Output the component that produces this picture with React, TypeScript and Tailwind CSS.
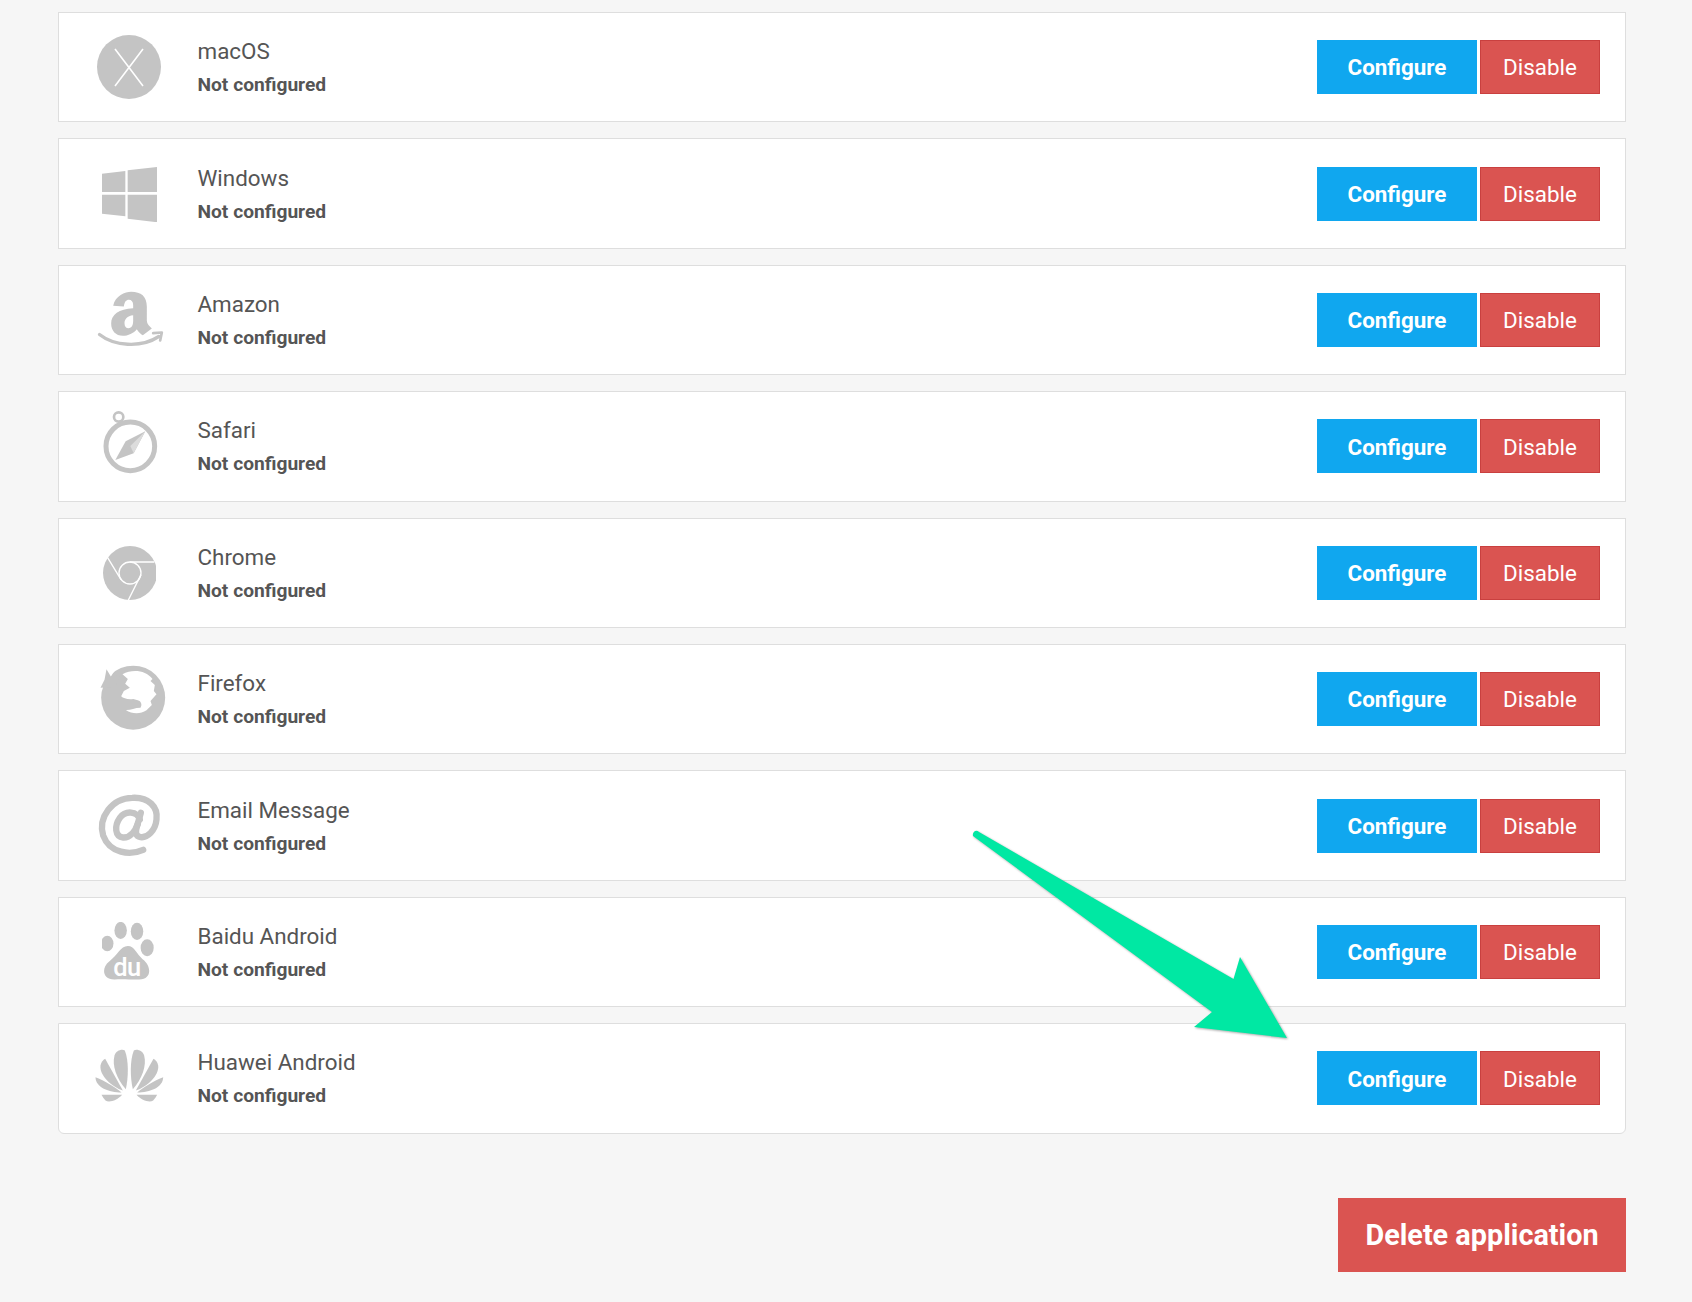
import React from 'react';

const ICON = '#c4c4c4';

function MacIcon() {
  return (
    <svg width="64" height="64" viewBox="0 0 64 64">
      <circle cx="32" cy="32" r="32" fill={ICON} />
      <path d="M18 14 L46 51 M46 14 L18 51" stroke="#fff" strokeWidth="1.6" fill="none" />
    </svg>
  );
}

function WindowsIcon() {
  return (
    <svg width="56" height="56" viewBox="152 497 168 168">
      <path fill={ICON} d="M155 520L225 512V575H155ZM232 510L322 500V575H232ZM155 583H225V648L155 640ZM232 583H322V666L232 655Z" />
    </svg>
  );
}

function AmazonIcon() {
  return (
    <svg width="85" height="85" viewBox="-10.5 -6.5 255 255">
      <path
        fill={ICON}
        fillRule="evenodd"
        d="M68 80C74 50 104 38 122 38C152 38 169 52 169 82V125C169 135 177 142 184 148L157 168C150 164 144 158 139 150C130 162 112 170 97 170C76 170 62 155 62 133C62 105 85 90 128 87V78C128 68 123 62 115 62C107 62 102 68 100 82ZM128 108C110 110 102 120 102 132C102 142 107 147 114 147C124 147 128 138 128 125Z"
      />
      <path fill="none" stroke={ICON} strokeWidth="10" strokeLinecap="round" d="M27 166C70 200 150 208 205 172" />
      <path fill="none" stroke={ICON} strokeWidth="8" strokeLinecap="round" strokeLinejoin="round" d="M188 162L214 160L209 184" />
    </svg>
  );
}

function SafariIcon() {
  return (
    <svg width="56.67" height="71.33" viewBox="152 469 170 214">
      <circle cx="240" cy="575" r="73" fill="none" stroke={ICON} strokeWidth="15" />
      <circle cx="205" cy="487" r="14" fill="none" stroke={ICON} strokeWidth="8" />
      <path fill={ICON} d="M285 530L250 596L195 616L226 560Z" />
      <path fill="#dcdcdc" d="M285 530L250 596L240 574Z" />
    </svg>
  );
}

function ChromeIcon() {
  return (
    <svg width="54" height="54" viewBox="155 106 162 162">
      <circle cx="239" cy="187" r="81" fill={ICON} />
      <g fill="none" stroke="#fff" strokeWidth="4">
        <circle cx="239" cy="187" r="33" />
        <path d="M170 138L212 207M238 154H312M272 192L234 268" />
      </g>
    </svg>
  );
}

function FirefoxIcon() {
  return (
    <svg width="85" height="85" viewBox="-10.5 6 255 255">
      <circle cx="128" cy="128" r="96" fill={ICON} />
      <path fill="#fff" d="M30 50H70L58 70L40 60Z" />
      <path fill={ICON} d="M48 43L62 66L88 60L76 95L30 98L42 74Z" />
      <path
        fill="#fff"
        d="M96 58C125 42 165 45 186 72L180 78L193 90L190 108L198 118L180 138L184 150L168 166C150 178 125 178 106 165C120 166 132 158 150 158C156 150 152 138 142 136L128 132C112 134 98 130 92 124L100 108L118 98L104 86L112 72Z"
      />
    </svg>
  );
}

function AtIcon() {
  return (
    <svg width="85" height="85" viewBox="-10.5 -7.5 255 255">
      <g fill="none" stroke={ICON} strokeWidth="19" strokeLinecap="round">
        <path d="M158 193C120 210 58 205 38 150C22 95 65 38 125 37C175 34 203 65 198 102C195 135 170 158 150 155C135 152 135 140 138 128L151 82" />
        <path d="M148 102C140 76 105 74 88 97C71 121 73 154 98 156C120 157 135 135 142 115" />
      </g>
    </svg>
  );
}

function BaiduIcon() {
  return (
    <svg width="54" height="60" viewBox="156 473 165 180">
      <g fill={ICON}>
        <ellipse cx="172" cy="537" rx="19" ry="24" />
        <ellipse cx="213" cy="497" rx="19" ry="26" />
        <ellipse cx="263" cy="500" rx="19" ry="26" />
        <ellipse cx="294" cy="550" rx="20" ry="26" />
        <path d="M235 545C255 545 262 570 280 585C305 602 312 645 270 647C250 648 220 645 195 647C156 648 154 610 178 592C205 572 212 545 235 545Z" />
      </g>
      <text x="232" y="635" textAnchor="middle" fill="#fff" fontFamily="Roboto, sans-serif" fontSize="78" fontWeight="500" letterSpacing="-2">du</text>
    </svg>
  );
}

function HuaweiIcon() {
  const petals = (
    <>
      <path d="M106 146C78 115 64 75 72 45C76 30 95 24 103 30C115 60 114 110 106 146Z" />
      <path d="M97 150C65 140 26 105 30 75C32 65 38 58 44 55Z" />
      <path d="M93 156C55 156 15 140 15 110C45 122 75 140 93 156Z" />
      <path d="M33 163H95C80 180 55 188 45 180C40 175 36 169 33 163Z" />
    </>
  );
  return (
    <svg width="85" height="85" viewBox="-10.5 -13.5 255 255" fill={ICON}>
      {petals}
      <g transform="matrix(-1 0 0 1 233 0)">{petals}</g>
    </svg>
  );
}

const apps = [
  { name: 'macOS', icon: <MacIcon /> },
  { name: 'Windows', icon: <WindowsIcon /> },
  { name: 'Amazon', icon: <AmazonIcon /> },
  { name: 'Safari', icon: <SafariIcon /> },
  { name: 'Chrome', icon: <ChromeIcon /> },
  { name: 'Firefox', icon: <FirefoxIcon /> },
  { name: 'Email Message', icon: <AtIcon /> },
  { name: 'Baidu Android', icon: <BaiduIcon /> },
  { name: 'Huawei Android', icon: <HuaweiIcon /> },
];

export default function App() {
  return (
    <div className="relative h-[1302px] overflow-hidden bg-[#f6f6f6] pl-[58px] pr-[66px] pt-3 font-['Roboto',sans-serif] text-[#555]">
      <div className="flex flex-col gap-4">
        {apps.map((app) => (
          <div
            key={app.name}
            className="flex h-[110.4px] items-center border border-[#dedede] bg-white pr-[25px] last:rounded-b-md"
          >
            <div className="flex w-[138.5px] shrink-0 justify-center pl-[2px]">{app.icon}</div>
            <div className="flex-1 pt-[2px]">
              <div className="text-[22.4px] leading-8">{app.name}</div>
              <div className="mt-[2px] text-[19.2px] leading-8 font-bold">Not configured</div>
            </div>
            <button className="h-[54px] w-[160px] bg-[#10a7ef] pt-[2px] text-[22.4px] font-bold text-white">Configure</button>
            <button className="ml-[3px] h-[54px] w-[120px] border border-[#c9403f] bg-[#da5451] pt-[2px] text-[22.4px] text-white">Disable</button>
          </div>
        ))}
      </div>
      <div className="mt-16 flex justify-end">
        <button className="h-[74px] w-[288px] bg-[#da5451] pt-[3px] text-[28.8px] font-bold text-white">Delete application</button>
      </div>
      <svg className="absolute left-[960px] top-[820px] drop-shadow-[1px_1px_1px_rgba(0,0,0,0.35)]" width="340" height="230" viewBox="960 820 340 230">
        <path fill="#00e8a3" d="M973 836C972 832 976 829 979 832L1233.5 979L1240 957L1287 1038L1194 1027L1212 1012Z" />
      </svg>
    </div>
  );
}
